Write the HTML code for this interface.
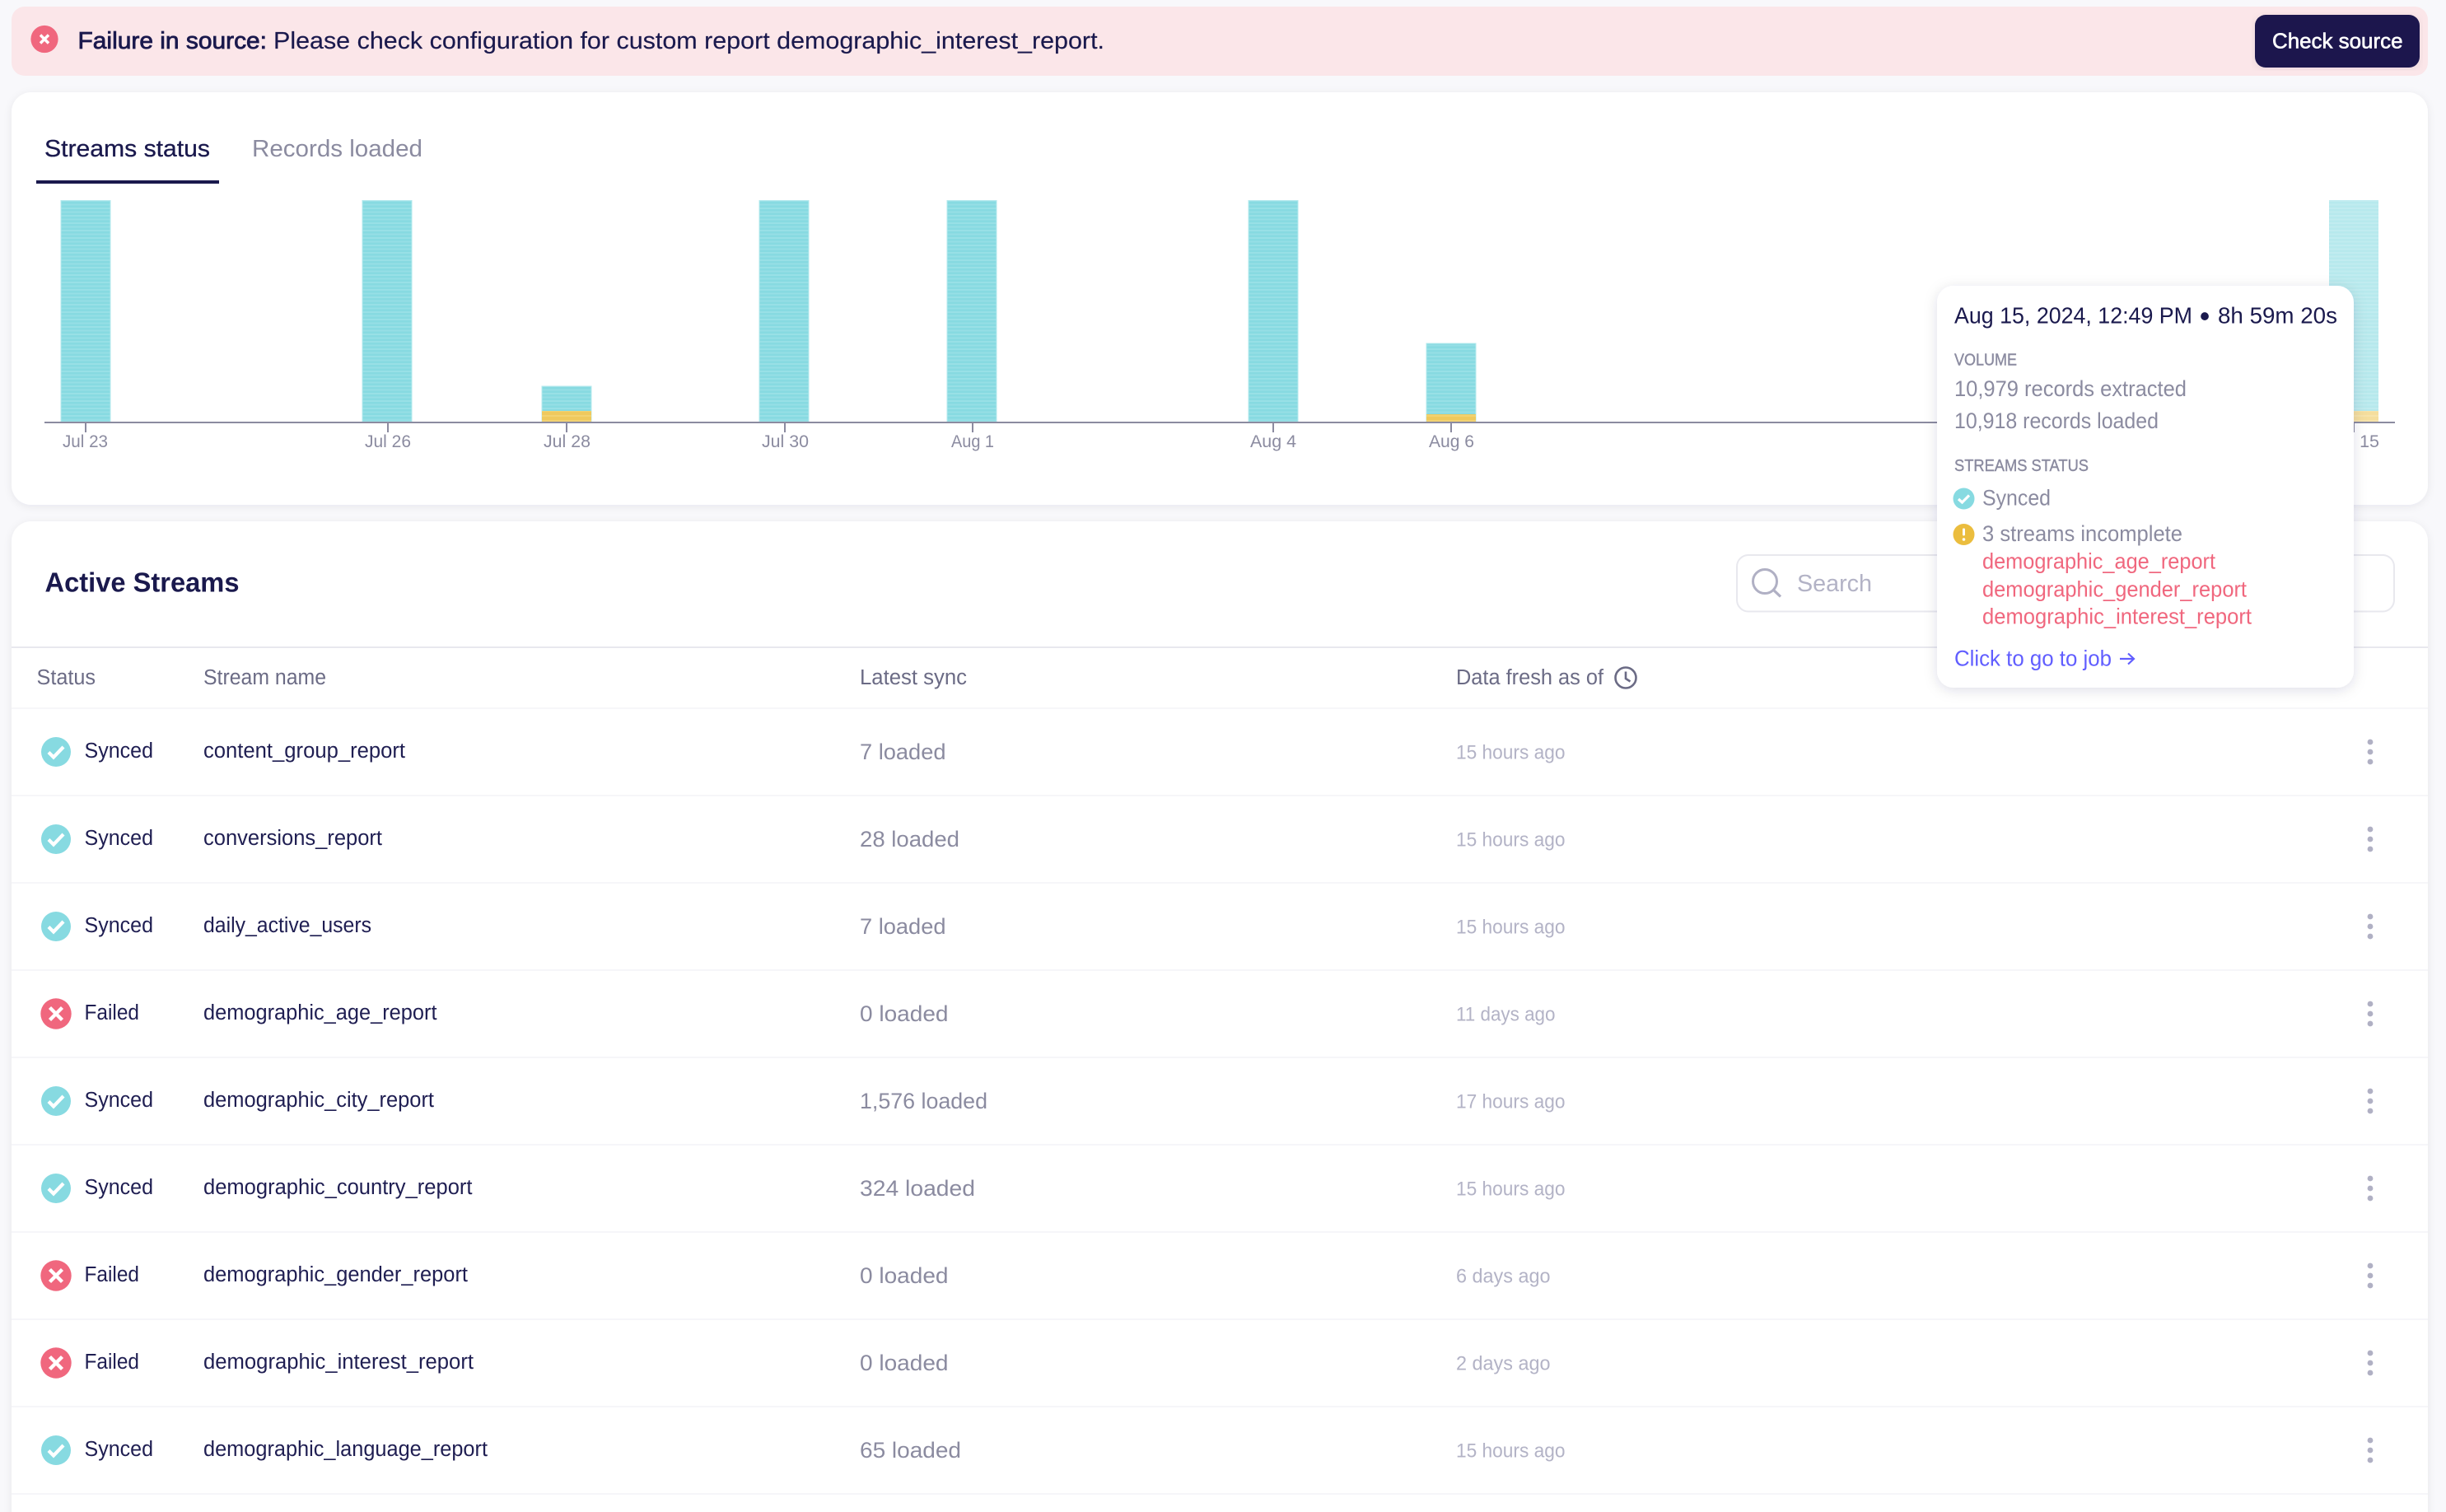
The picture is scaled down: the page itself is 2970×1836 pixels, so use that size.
<!DOCTYPE html>
<html lang="en">
<head>
<meta charset="utf-8">
<title>Streams status</title>
<style>
html,body{margin:0;padding:0;width:2970px;height:1836px;overflow:hidden;background:#f8f8fb}
svg{display:block}
text{font-family:"Liberation Sans",Arial,sans-serif;white-space:pre}
.navy{fill:#1a194d}
.grey{fill:#8b8ba0}
.head{fill:#6b6b85;font-size:25.5px}
.cell{fill:#1f1e52;font-size:25.5px}
.sync{fill:#8b8ba0;font-size:27px}
.age{fill:#b3b3c6;font-size:24px}
.tick{fill:#8b8ba0;font-size:21.5px}
.tip{fill:#8b8ba0;font-size:26.5px}
.cap{fill:#8b8ba0;font-size:20.5px;stroke:#8b8ba0;stroke-width:.4}
.red{fill:#f0677e;font-size:26.5px}
.med{stroke-width:.6}
</style>
</head>
<body>
<svg xmlns="http://www.w3.org/2000/svg" width="2970" height="1836" viewBox="0 0 2970 1836">
<defs>
<pattern id="st" width="61" height="9" patternUnits="userSpaceOnUse" y="243">
<rect width="61" height="9" fill="#87dae1"/>
<rect y="0" width="61" height="2" fill="#98e0e6"/>
<rect y="4.5" width="61" height="2" fill="#96dfe5"/>
</pattern>
<pattern id="yl" width="61" height="6" patternUnits="userSpaceOnUse">
<rect width="61" height="6" fill="#efc95d"/>
<rect y="0" width="61" height="2" fill="#f2d272"/>
</pattern>
<filter id="sh" x="-2%" y="-5%" width="104%" height="110%">
<feDropShadow dx="0" dy="2" stdDeviation="5" flood-color="#1a194d" flood-opacity=".07"/>
</filter>
<filter id="tipsh" x="-10%" y="-10%" width="120%" height="120%">
<feDropShadow dx="0" dy="3" stdDeviation="8" flood-color="#1a194d" flood-opacity=".13"/>
</filter>
<g id="ok">
<circle r="18" fill="#87dae1"/>
<path d="M-9 0.5 L-3 6.5 L9 -6" fill="none" stroke="#fff" stroke-width="4.2"/>
</g>
<g id="bad">
<circle r="18.7" fill="#f0677e"/>
<path d="M-7.5 -7.5 L7.5 7.5 M7.5 -7.5 L-7.5 7.5" fill="none" stroke="#fff" stroke-width="4.4"/>
</g>
<g id="dots" fill="#b0b0c4">
<circle cy="-12" r="3.4"/><circle r="3.4"/><circle cy="12" r="3.4"/>
</g>
</defs>

<rect width="2970" height="1836" fill="#f8f8fb"/>

<!-- Banner -->
<rect x="14" y="8" width="2934" height="84" rx="16" fill="#fbe6e9"/>
<circle cx="54" cy="47.5" r="16.6" fill="#f0677e"/>
<path d="M49 42.5 L59 52.5 M59 42.5 L49 52.5" stroke="#fff" stroke-width="3.4" fill="none"/>
<text x="94.5" y="59" font-size="29" class="navy" stroke="#1a194d" stroke-width=".8" textLength="229.5" lengthAdjust="spacingAndGlyphs">Failure in source:</text>
<text x="332" y="59" font-size="29" class="navy" stroke="#1a194d" stroke-width=".15" textLength="1009" lengthAdjust="spacingAndGlyphs">Please check configuration for custom report demographic_interest_report.</text>
<rect x="2738" y="18" width="200" height="64" rx="13" fill="#1a194d" filter="url(#sh)"/>
<text x="2759" y="58.5" font-size="26" fill="#fff" stroke="#fff" stroke-width=".6" textLength="158.5" lengthAdjust="spacingAndGlyphs">Check source</text>

<!-- Chart card -->
<rect x="14" y="112" width="2934" height="501" rx="24" fill="#fff" filter="url(#sh)"/>
<text x="54" y="190" font-size="29" class="navy" stroke="#1a194d" stroke-width=".3" textLength="201" lengthAdjust="spacingAndGlyphs">Streams status</text>
<text x="306" y="190" font-size="29" class="grey" textLength="207" lengthAdjust="spacingAndGlyphs">Records loaded</text>
<rect x="44" y="219" width="222" height="4" fill="#1a194d"/>

<!-- Bars -->
<g stroke="#b4e9ed" stroke-width="1">
<rect x="74" y="243.5" width="60" height="268.5" fill="url(#st)"/>
<rect x="440" y="243.5" width="60" height="268.5" fill="url(#st)"/>
<rect x="658" y="469" width="60" height="43" fill="url(#st)"/>
<rect x="922" y="243.5" width="60" height="268.5" fill="url(#st)"/>
<rect x="1150" y="243.5" width="60" height="268.5" fill="url(#st)"/>
<rect x="1516" y="243.5" width="60" height="268.5" fill="url(#st)"/>
<rect x="1732" y="417" width="60" height="95" fill="url(#st)"/>
</g>
<rect x="658" y="499" width="60" height="13" fill="url(#yl)"/>
<rect x="1732" y="503" width="60" height="9" fill="url(#yl)"/>
<g opacity=".6">
<rect x="2828" y="243" width="60" height="269" fill="url(#st)"/>
<rect x="2828" y="499" width="60" height="13" fill="url(#yl)"/>
</g>
<rect x="54" y="512" width="2854" height="2" fill="#8b8ba0"/>
<g fill="#8b8ba0">
<rect x="103" y="513" width="2" height="12"/>
<rect x="470" y="513" width="2" height="12"/>
<rect x="687" y="513" width="2" height="12"/>
<rect x="952" y="513" width="2" height="12"/>
<rect x="1180" y="513" width="2" height="12"/>
<rect x="1545" y="513" width="2" height="12"/>
<rect x="1761" y="513" width="2" height="12"/>
<rect x="2857" y="513" width="2" height="12"/>
</g>
<text x="76" y="543" class="tick" textLength="55" lengthAdjust="spacingAndGlyphs">Jul 23</text>
<text x="443" y="543" class="tick" textLength="56" lengthAdjust="spacingAndGlyphs">Jul 26</text>
<text x="660" y="543" class="tick" textLength="57" lengthAdjust="spacingAndGlyphs">Jul 28</text>
<text x="925" y="543" class="tick" textLength="57" lengthAdjust="spacingAndGlyphs">Jul 30</text>
<text x="1155" y="543" class="tick" textLength="52" lengthAdjust="spacingAndGlyphs">Aug 1</text>
<text x="1518" y="543" class="tick" textLength="56" lengthAdjust="spacingAndGlyphs">Aug 4</text>
<text x="1735" y="543" class="tick" textLength="55" lengthAdjust="spacingAndGlyphs">Aug 6</text>
<text x="2821" y="543" class="tick" textLength="68" lengthAdjust="spacingAndGlyphs">Aug 15</text>

<!-- Active streams card -->
<rect x="14" y="633" width="2934" height="1240" rx="24" fill="#fff" filter="url(#sh)"/>
<text x="54.5" y="718.5" font-size="33" font-weight="700" class="navy" textLength="236" lengthAdjust="spacingAndGlyphs">Active Streams</text>

<rect x="2109" y="674" width="798" height="68.5" rx="14" fill="#fff" stroke="#e8e8ee" stroke-width="2"/>
<circle cx="2143" cy="706" r="14.5" fill="none" stroke="#b0b0c4" stroke-width="3"/>
<path d="M2153.5 716.5 L2162 724.5" stroke="#b0b0c4" stroke-width="3.2" fill="none"/>
<text x="2182" y="718" font-size="29" fill="#b3b3c6" textLength="91" lengthAdjust="spacingAndGlyphs">Search</text>

<rect x="14" y="785" width="2934" height="2" fill="#e8e8ee"/>

<text x="44.5" y="831" class="head" textLength="71.5" lengthAdjust="spacingAndGlyphs">Status</text>
<text x="247" y="831" class="head" textLength="149" lengthAdjust="spacingAndGlyphs">Stream name</text>
<text x="1044" y="831" class="head" textLength="130" lengthAdjust="spacingAndGlyphs">Latest sync</text>
<text x="1768" y="831" class="head" textLength="179" lengthAdjust="spacingAndGlyphs">Data fresh as of</text>
<circle cx="1974" cy="823" r="12.5" fill="none" stroke="#6b6b85" stroke-width="2.6"/>
<path d="M1974 815.5 V824 L1979.5 827.5" fill="none" stroke="#6b6b85" stroke-width="2.6"/>

<!-- Row separators -->
<g fill="#f6f6f9">
<rect x="14" y="859" width="2934" height="2"/>
<rect x="14" y="965" width="2934" height="2"/>
<rect x="14" y="1071" width="2934" height="2"/>
<rect x="14" y="1177" width="2934" height="2"/>
<rect x="14" y="1283" width="2934" height="2"/>
<rect x="14" y="1389" width="2934" height="2"/>
<rect x="14" y="1495" width="2934" height="2"/>
<rect x="14" y="1601" width="2934" height="2"/>
<rect x="14" y="1707" width="2934" height="2"/>
<rect x="14" y="1813" width="2934" height="2"/>
</g>

<!-- Row 1 -->
<use href="#ok" x="68" y="913"/>
<text x="102.5" y="920" class="cell" textLength="83.5" lengthAdjust="spacingAndGlyphs">Synced</text>
<text x="247" y="920" class="cell" textLength="245" lengthAdjust="spacingAndGlyphs">content_group_report</text>
<text x="1044" y="922" class="sync" textLength="104.5" lengthAdjust="spacingAndGlyphs">7 loaded</text>
<text x="1768" y="921.5" class="age" textLength="132.5" lengthAdjust="spacingAndGlyphs">15 hours ago</text>
<use href="#dots" x="2878" y="913"/>
<!-- Row 2 -->
<use href="#ok" x="68" y="1019"/>
<text x="102.5" y="1026" class="cell" textLength="83.5" lengthAdjust="spacingAndGlyphs">Synced</text>
<text x="247" y="1026" class="cell" textLength="217" lengthAdjust="spacingAndGlyphs">conversions_report</text>
<text x="1044" y="1028" class="sync" textLength="121" lengthAdjust="spacingAndGlyphs">28 loaded</text>
<text x="1768" y="1027.5" class="age" textLength="132.5" lengthAdjust="spacingAndGlyphs">15 hours ago</text>
<use href="#dots" x="2878" y="1019"/>
<!-- Row 3 -->
<use href="#ok" x="68" y="1125"/>
<text x="102.5" y="1132" class="cell" textLength="83.5" lengthAdjust="spacingAndGlyphs">Synced</text>
<text x="247" y="1132" class="cell" textLength="204" lengthAdjust="spacingAndGlyphs">daily_active_users</text>
<text x="1044" y="1134" class="sync" textLength="104.5" lengthAdjust="spacingAndGlyphs">7 loaded</text>
<text x="1768" y="1133.5" class="age" textLength="132.5" lengthAdjust="spacingAndGlyphs">15 hours ago</text>
<use href="#dots" x="2878" y="1125"/>
<!-- Row 4 -->
<use href="#bad" x="68" y="1231"/>
<text x="102.5" y="1238" class="cell" textLength="66.5" lengthAdjust="spacingAndGlyphs">Failed</text>
<text x="247" y="1238" class="cell" textLength="283.5" lengthAdjust="spacingAndGlyphs">demographic_age_report</text>
<text x="1044" y="1240" class="sync" textLength="107.5" lengthAdjust="spacingAndGlyphs">0 loaded</text>
<text x="1768" y="1239.5" class="age" textLength="120.5" lengthAdjust="spacingAndGlyphs">11 days ago</text>
<use href="#dots" x="2878" y="1231"/>
<!-- Row 5 -->
<use href="#ok" x="68" y="1337"/>
<text x="102.5" y="1344" class="cell" textLength="83.5" lengthAdjust="spacingAndGlyphs">Synced</text>
<text x="247" y="1344" class="cell" textLength="280" lengthAdjust="spacingAndGlyphs">demographic_city_report</text>
<text x="1044" y="1346" class="sync" textLength="155" lengthAdjust="spacingAndGlyphs">1,576 loaded</text>
<text x="1768" y="1345.5" class="age" textLength="132.5" lengthAdjust="spacingAndGlyphs">17 hours ago</text>
<use href="#dots" x="2878" y="1337"/>
<!-- Row 6 -->
<use href="#ok" x="68" y="1443"/>
<text x="102.5" y="1450" class="cell" textLength="83.5" lengthAdjust="spacingAndGlyphs">Synced</text>
<text x="247" y="1450" class="cell" textLength="326.5" lengthAdjust="spacingAndGlyphs">demographic_country_report</text>
<text x="1044" y="1452" class="sync" textLength="140" lengthAdjust="spacingAndGlyphs">324 loaded</text>
<text x="1768" y="1451.5" class="age" textLength="132.5" lengthAdjust="spacingAndGlyphs">15 hours ago</text>
<use href="#dots" x="2878" y="1443"/>
<!-- Row 7 -->
<use href="#bad" x="68" y="1549"/>
<text x="102.5" y="1556" class="cell" textLength="66.5" lengthAdjust="spacingAndGlyphs">Failed</text>
<text x="247" y="1556" class="cell" textLength="321" lengthAdjust="spacingAndGlyphs">demographic_gender_report</text>
<text x="1044" y="1558" class="sync" textLength="107.5" lengthAdjust="spacingAndGlyphs">0 loaded</text>
<text x="1768" y="1557.5" class="age" textLength="114.5" lengthAdjust="spacingAndGlyphs">6 days ago</text>
<use href="#dots" x="2878" y="1549"/>
<!-- Row 8 -->
<use href="#bad" x="68" y="1655"/>
<text x="102.5" y="1662" class="cell" textLength="66.5" lengthAdjust="spacingAndGlyphs">Failed</text>
<text x="247" y="1662" class="cell" textLength="328" lengthAdjust="spacingAndGlyphs">demographic_interest_report</text>
<text x="1044" y="1664" class="sync" textLength="107.5" lengthAdjust="spacingAndGlyphs">0 loaded</text>
<text x="1768" y="1663.5" class="age" textLength="114.5" lengthAdjust="spacingAndGlyphs">2 days ago</text>
<use href="#dots" x="2878" y="1655"/>
<!-- Row 9 -->
<use href="#ok" x="68" y="1761"/>
<text x="102.5" y="1768" class="cell" textLength="83.5" lengthAdjust="spacingAndGlyphs">Synced</text>
<text x="247" y="1768" class="cell" textLength="345" lengthAdjust="spacingAndGlyphs">demographic_language_report</text>
<text x="1044" y="1770" class="sync" textLength="123" lengthAdjust="spacingAndGlyphs">65 loaded</text>
<text x="1768" y="1769.5" class="age" textLength="132.5" lengthAdjust="spacingAndGlyphs">15 hours ago</text>
<use href="#dots" x="2878" y="1761"/>

<!-- Tooltip -->
<rect x="2352" y="347" width="506" height="488" rx="20" fill="#fff" filter="url(#tipsh)"/>
<text x="2373" y="392.5" font-size="28" class="navy" textLength="289" lengthAdjust="spacingAndGlyphs">Aug 15, 2024, 12:49 PM</text>
<text x="2670.7" y="396" font-size="36" class="navy">•</text>
<text x="2693" y="392.5" font-size="28" class="navy" textLength="145" lengthAdjust="spacingAndGlyphs">8h 59m 20s</text>
<text x="2373" y="443.5" class="cap" textLength="76" lengthAdjust="spacingAndGlyphs">VOLUME</text>
<text x="2373" y="481" class="tip" textLength="282" lengthAdjust="spacingAndGlyphs">10,979 records extracted</text>
<text x="2373" y="520" class="tip" textLength="248" lengthAdjust="spacingAndGlyphs">10,918 records loaded</text>
<text x="2373" y="572" class="cap" textLength="163" lengthAdjust="spacingAndGlyphs">STREAMS STATUS</text>
<circle cx="2384.5" cy="605.5" r="13" fill="#87dae1"/>
<path d="M2378 606 L2382.5 610 L2391 601.5" fill="none" stroke="#fff" stroke-width="3.2"/>
<text x="2407" y="613.5" class="tip" textLength="83" lengthAdjust="spacingAndGlyphs">Synced</text>
<circle cx="2384.5" cy="649" r="13" fill="#ebbd3e"/>
<rect x="2383" y="641.5" width="3" height="9" rx="1.2" fill="#fff"/>
<circle cx="2384.5" cy="655" r="1.8" fill="#fff"/>
<text x="2407" y="657" class="tip" textLength="243" lengthAdjust="spacingAndGlyphs">3 streams incomplete</text>
<text x="2407" y="690.5" class="red" textLength="283" lengthAdjust="spacingAndGlyphs">demographic_age_report</text>
<text x="2407" y="724.5" class="red" textLength="321" lengthAdjust="spacingAndGlyphs">demographic_gender_report</text>
<text x="2407" y="757.5" class="red" textLength="327" lengthAdjust="spacingAndGlyphs">demographic_interest_report</text>
<text x="2373" y="808.5" font-size="26.5" fill="#615eff" textLength="191" lengthAdjust="spacingAndGlyphs">Click to go to job</text>
<path d="M2574 800 H2591 M2584 793.5 L2591 800 L2584 806.5" fill="none" stroke="#615eff" stroke-width="2.2"/>
</svg>
</body>
</html>
